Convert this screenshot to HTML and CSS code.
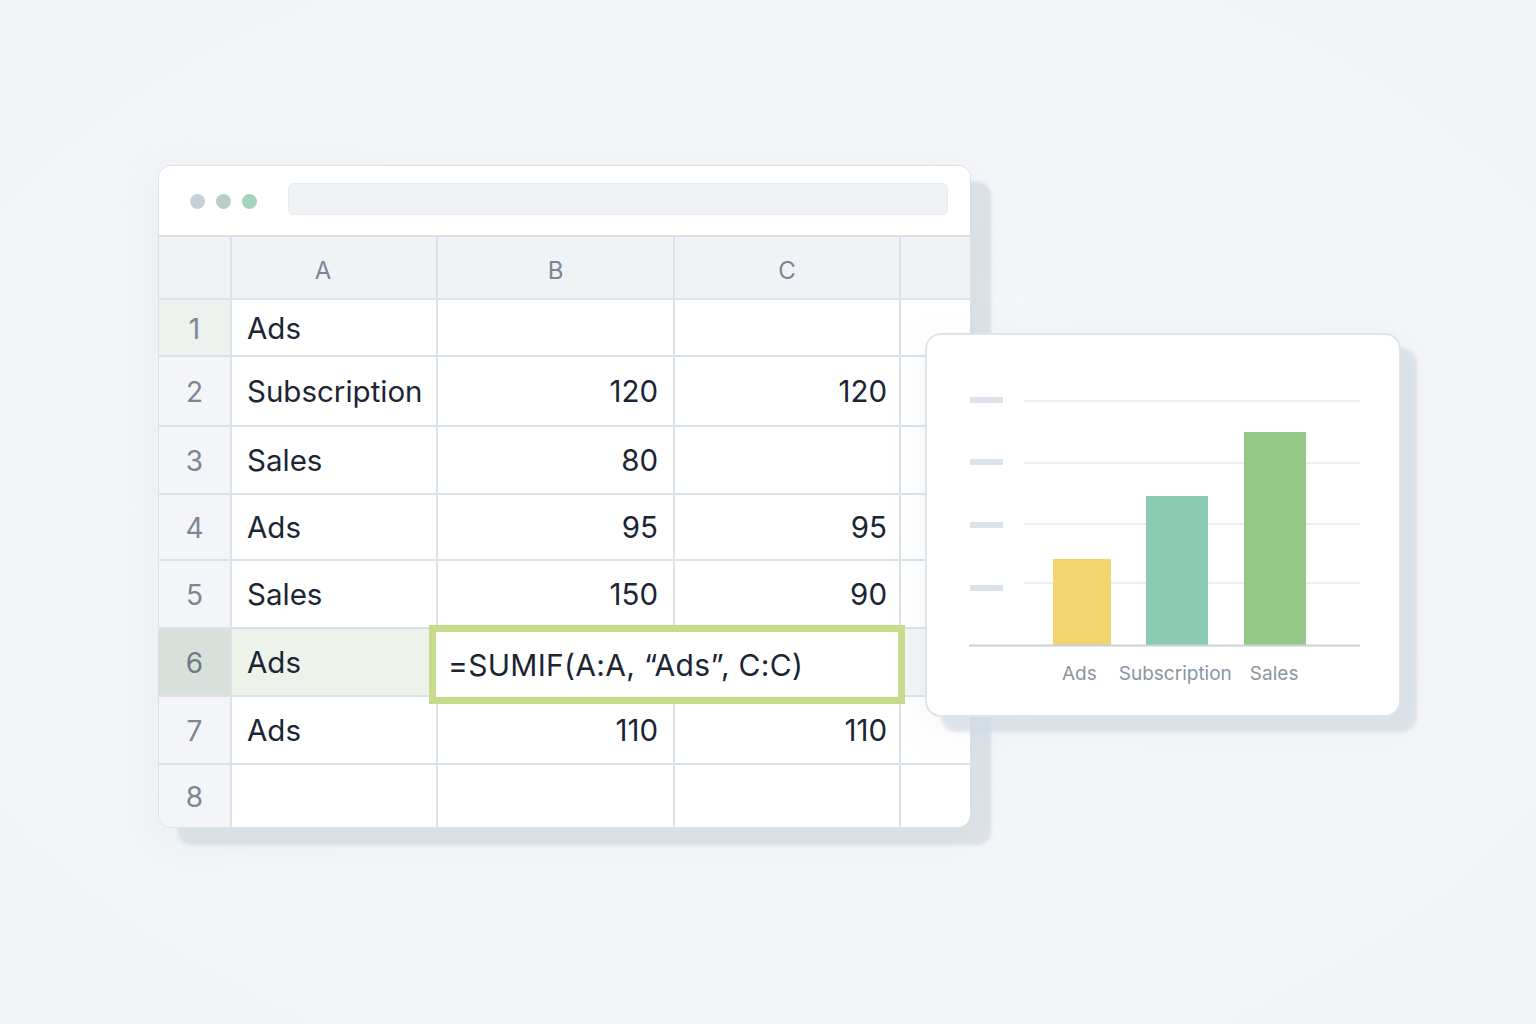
FILE: index.html
```html
<!DOCTYPE html>
<html lang="en">
<head>
<meta charset="utf-8">
<title>SUMIF spreadsheet</title>
<link rel="stylesheet" href="styles.css">
</head>
<body>
<div class="canvas">
  <div class="sheet">
    <div class="titlebar">
      <div class="dots">
        <span class="dot dot-1"></span>
        <span class="dot dot-2"></span>
        <span class="dot dot-3"></span>
      </div>
      <div class="address"></div>
    </div>
    <div class="grid">
      <div class="cell corner"></div>
      <div class="cell colhead colhead-a">A</div>
      <div class="cell colhead">B</div>
      <div class="cell colhead">C</div>
      <div class="cell colhead end"></div>

      <div class="cell rowhead rowhead-1">1</div>
      <div class="cell text">Ads</div>
      <div class="cell num num-b"></div>
      <div class="cell num num-c"></div>
      <div class="cell end"></div>

      <div class="cell rowhead">2</div>
      <div class="cell text">Subscription</div>
      <div class="cell num num-b">120</div>
      <div class="cell num num-c">120</div>
      <div class="cell end"></div>

      <div class="cell rowhead">3</div>
      <div class="cell text">Sales</div>
      <div class="cell num num-b">80</div>
      <div class="cell num num-c"></div>
      <div class="cell end"></div>

      <div class="cell rowhead">4</div>
      <div class="cell text">Ads</div>
      <div class="cell num num-b">95</div>
      <div class="cell num num-c">95</div>
      <div class="cell end"></div>

      <div class="cell rowhead">5</div>
      <div class="cell text">Sales</div>
      <div class="cell num num-b">150</div>
      <div class="cell num num-c">90</div>
      <div class="cell end"></div>

      <div class="cell rowhead rowhead-sel">6</div>
      <div class="cell text cell-sel">Ads</div>
      <div class="formula">=SUMIF(A:A, “Ads”, C:C)</div>
      <div class="cell end end-sel"></div>

      <div class="cell rowhead">7</div>
      <div class="cell text">Ads</div>
      <div class="cell num num-b">110</div>
      <div class="cell num num-c">110</div>
      <div class="cell end"></div>

      <div class="cell rowhead last">8</div>
      <div class="cell text last"></div>
      <div class="cell num last"></div>
      <div class="cell num last"></div>
      <div class="cell end last"></div>
    </div>
  </div>

  <div class="chart-card">
    <svg class="plot" width="392" height="251" viewBox="0 0 392 251" aria-hidden="true">
      <g fill="#dce2e9">
        <rect x="1" y="1" width="33" height="6"/>
        <rect x="1" y="63" width="33" height="6"/>
        <rect x="1" y="126" width="33" height="6"/>
        <rect x="1" y="189" width="33" height="6"/>
      </g>
      <g stroke="#e4e9ef" stroke-width="1.5">
        <line x1="55" y1="5" x2="391" y2="5"/>
        <line x1="55" y1="67" x2="391" y2="67"/>
        <line x1="55" y1="128" x2="391" y2="128"/>
        <line x1="55" y1="187" x2="391" y2="187"/>
      </g>
      <rect x="84" y="163" width="58" height="86" fill="#f1d66f"/>
      <rect x="177" y="100" width="62" height="149" fill="#8ccbb3"/>
      <rect x="275" y="36" width="62" height="213" fill="#94c886"/>
      <line x1="0" y1="249.5" x2="391" y2="249.5" stroke="#c8d0d8" stroke-width="2"/>
    </svg>
    <div class="labels">
      <span class="label-ads">Ads</span>
      <span class="label-sub">Subscription</span>
      <span class="label-sales">Sales</span>
    </div>
  </div>
</div>
</body>
</html>
```

FILE: styles.css
```css
* { box-sizing: border-box; }

html, body {
  margin: 0;
  padding: 0;
}

body {
  background: #f4f6f9;
  font-family: Inter, "Noto Sans", "Liberation Sans", sans-serif;
  color: #1b2534;
}

.canvas {
  position: relative;
  width: 1536px;
  height: 1024px;
  overflow: hidden;
  background: radial-gradient(ellipse at 50% 50%, #f6f7fa 0%, #f3f5f8 70%, #f1f3f6 100%);
}

/* ---------- spreadsheet window ---------- */
.sheet {
  position: absolute;
  left: 158px;
  top: 165px;
  width: 813px;
  height: 663px;
  background: #ffffff;
  border: 1px solid #dbe1e7;
  border-radius: 13px;
  overflow: hidden;
  box-shadow: 20px 17px 3px rgba(208, 216, 224, 0.7), 0 10px 40px rgba(190, 200, 212, 0.18);
  display: flex;
  flex-direction: column;
}

.titlebar {
  height: 71px;
  flex: none;
  display: flex;
  align-items: center;
  padding: 0 22px 0 31px;
  gap: 31px;
  border-bottom: 2px solid #dde3e9;
  background: #ffffff;
}

.dots {
  display: flex;
  gap: 11px;
  margin-top: 2px;
}

.dot {
  width: 15px;
  height: 15px;
  border-radius: 50%;
}

.dot-1 { background: #c6d0d6; }
.dot-2 { background: #b8cec6; }
.dot-3 { background: #a6d3bc; }

.address {
  flex: 1;
  height: 32px;
  margin-top: -4px;
  background: #eff2f5;
  border: 1px solid #e8ecf0;
  border-radius: 5px;
}

.grid {
  flex: 1;
  display: grid;
  grid-template-columns: 73px 206px 237px 226px 1fr;
  grid-template-rows: 63px 57px 70px 68px 66px 68px 68px 68px 1fr;
}

.cell {
  border-right: 2px solid #dbe2e8;
  border-bottom: 2px solid #dbe2e8;
  display: flex;
  align-items: center;
  font-size: 29.5px;
  line-height: 1;
  color: #1b2534;
  padding-top: 2px;
}

.cell.end { border-right: none; }
.cell.last { border-bottom: none; }

.corner {
  background: #f0f3f6;
}

.colhead {
  background: #f0f3f6;
  justify-content: center;
  font-size: 24px;
  color: #7b8693;
  padding-top: 6px;
}

.colhead-a { padding-right: 22px; }

.rowhead {
  background: #f3f5f8;
  justify-content: center;
  font-size: 28px;
  color: #7c8795;
}

.rowhead-1 { background: #eef2ef; }

.rowhead-sel {
  background: #d8e0db;
  color: #6f7a83;
}

.text {
  padding-left: 15px;
}

.num {
  justify-content: flex-end;
}

.num-b { padding-right: 15px; }
.num-c { padding-right: 12px; }

.cell-sel {
  background: #edf3eb;
}

.end-sel {
  background: #f3f5f7;
}

.formula {
  grid-column: 3 / 5;
  position: relative;
  z-index: 2;
  margin: -4px -4px -7px -9px;
  border: 7px solid #c7dc8b;
  background: #ffffff;
  display: flex;
  align-items: center;
  padding: 0 0 0 12px;
  font-size: 30px;
  letter-spacing: 0.3px;
  line-height: 1;
  color: #1b2534;
  white-space: nowrap;
}

/* ---------- chart card ---------- */
.chart-card {
  position: absolute;
  left: 925px;
  top: 333px;
  width: 476px;
  height: 384px;
  background: #ffffff;
  border: 2px solid #dde3e9;
  border-radius: 16px;
  box-shadow: 16px 15px 3px rgba(210, 218, 226, 0.7), 0 10px 36px rgba(190, 200, 212, 0.18);
  padding: 61px 0 0 42px;
  display: flex;
  flex-direction: column;
  z-index: 5;
}

.plot {
  display: block;
}

.labels {
  display: flex;
  padding-left: 93px;
  margin-top: 15px;
  font-size: 19px;
  line-height: 24px;
  color: #8a95a2;
}

.label-sub { margin-left: 22px; }
.label-sales { margin-left: 18px; }
```
